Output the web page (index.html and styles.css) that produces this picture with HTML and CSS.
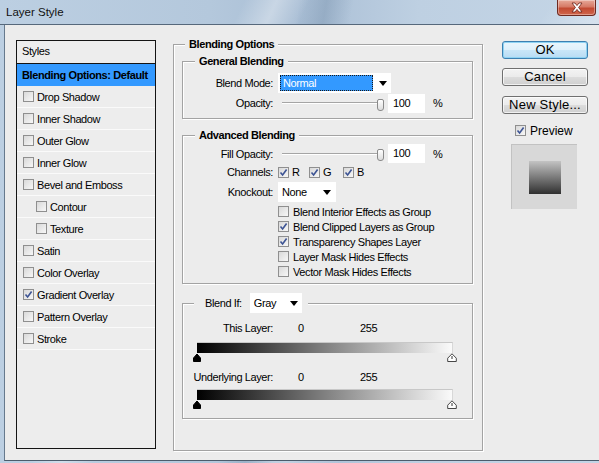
FILE: index.html
```html
<!DOCTYPE html>
<html>
<head>
<meta charset="utf-8">
<title>Layer Style</title>
<link rel="stylesheet" href="styles.css">
</head>
<body>
<div class="window">
  <div class="titlebar">
    <span class="title">Layer Style</span>
    <div class="close">
      <svg width="16" height="11" viewBox="0 0 16 11"><path d="M3 1 L6 1 L8 3.6 L10 1 L13 1 L9.6 5.5 L13 10 L10 10 L8 7.4 L6 10 L3 10 L6.4 5.5 Z" fill="#fff" stroke="#6b2015" stroke-width="0.8"/></svg>
    </div>
  </div>
  <div class="client">
    <div class="styles-list">
      <div class="styles-head">Styles</div>
      <div class="style-row selected">Blending Options: Default</div>
      <div class="style-row"><span class="cb"></span>Drop Shadow</div>
      <div class="style-row"><span class="cb"></span>Inner Shadow</div>
      <div class="style-row"><span class="cb"></span>Outer Glow</div>
      <div class="style-row"><span class="cb"></span>Inner Glow</div>
      <div class="style-row"><span class="cb"></span>Bevel and Emboss</div>
      <div class="style-row sub"><span class="cb"></span>Contour</div>
      <div class="style-row sub"><span class="cb"></span>Texture</div>
      <div class="style-row"><span class="cb"></span>Satin</div>
      <div class="style-row"><span class="cb"></span>Color Overlay</div>
      <div class="style-row"><span class="cb checked"><svg width="9" height="9" viewBox="0 0 9 9"><path d="M1.5 4.5 L3.6 7 L7.6 1.5" fill="none" stroke="#3d5494" stroke-width="1.6"/></svg></span>Gradient Overlay</div>
      <div class="style-row"><span class="cb"></span>Pattern Overlay</div>
      <div class="style-row"><span class="cb"></span>Stroke</div>
    </div>

    <fieldset class="group outer">
      <legend class="legend-outer">Blending Options</legend>

      <fieldset class="group inner general">
        <legend class="legend-inner">General Blending</legend>
        <div class="row r20">
          <span class="lbl">Blend Mode:</span>
          <div class="select blend-select">
            <div class="sel-val">Normal</div>
            <span class="arrow"></span>
          </div>
        </div>
        <div class="row r20">
          <span class="lbl">Opacity:</span>
          <div class="slider"><div class="track"></div><div class="thumb"></div></div>
          <div class="num">100</div>
          <span class="pct">%</span>
        </div>
      </fieldset>

      <fieldset class="group inner advanced">
        <legend class="legend-inner">Advanced Blending</legend>
        <div class="row r19 fill-row">
          <span class="lbl">Fill Opacity:</span>
          <div class="slider"><div class="track"></div><div class="thumb"></div></div>
          <div class="num">100</div>
          <span class="pct">%</span>
        </div>
        <div class="row r18">
          <span class="lbl">Channels:</span>
          <span class="chan chan-r"><span class="cb checked"><svg width="9" height="9" viewBox="0 0 9 9"><path d="M1.5 4.5 L3.6 7 L7.6 1.5" fill="none" stroke="#3d5494" stroke-width="1.6"/></svg></span>R</span>
          <span class="chan chan-g"><span class="cb checked"><svg width="9" height="9" viewBox="0 0 9 9"><path d="M1.5 4.5 L3.6 7 L7.6 1.5" fill="none" stroke="#3d5494" stroke-width="1.6"/></svg></span>G</span>
          <span class="chan"><span class="cb checked"><svg width="9" height="9" viewBox="0 0 9 9"><path d="M1.5 4.5 L3.6 7 L7.6 1.5" fill="none" stroke="#3d5494" stroke-width="1.6"/></svg></span>B</span>
        </div>
        <div class="row r20 knock-row">
          <span class="lbl">Knockout:</span>
          <div class="select knock-select">
            <span>None</span>
            <span class="arrow"></span>
          </div>
        </div>
        <div class="checklist">
          <div class="chk-row"><span class="cb"></span>Blend Interior Effects as Group</div>
          <div class="chk-row"><span class="cb checked"><svg width="9" height="9" viewBox="0 0 9 9"><path d="M1.5 4.5 L3.6 7 L7.6 1.5" fill="none" stroke="#3d5494" stroke-width="1.6"/></svg></span>Blend Clipped Layers as Group</div>
          <div class="chk-row"><span class="cb checked"><svg width="9" height="9" viewBox="0 0 9 9"><path d="M1.5 4.5 L3.6 7 L7.6 1.5" fill="none" stroke="#3d5494" stroke-width="1.6"/></svg></span>Transparency Shapes Layer</div>
          <div class="chk-row"><span class="cb"></span>Layer Mask Hides Effects</div>
          <div class="chk-row"><span class="cb"></span>Vector Mask Hides Effects</div>
        </div>
      </fieldset>

      <fieldset class="group inner blendif">
        <legend class="legend-blendif">
          <span class="bi-label">Blend If:</span>
          <div class="select gray-select">
            <span>Gray</span>
            <span class="arrow"></span>
          </div>
        </legend>
        <div class="row r16 layer-row">
          <span class="lbl">This Layer:</span>
          <span class="v0">0</span>
          <span>255</span>
        </div>
        <div class="grad-bar"></div>
        <div class="thumbs">
          <svg width="8" height="9" viewBox="0 0 8 9"><path d="M4 1 L7.5 5 L7.5 8.5 L0.5 8.5 L0.5 5 Z" fill="#000" stroke="#000" stroke-width="1"/></svg>
          <svg width="10" height="9" viewBox="0 0 10 9"><path d="M5 0.8 L9.3 5.2 L9.3 8.5 L0.7 8.5 L0.7 5.2 Z" fill="#fff" stroke="#333" stroke-width="0.9"/><path d="M5 3 L5 6" stroke="#333" stroke-width="1"/></svg>
        </div>
        <div class="row r16 layer-row under-row">
          <span class="lbl">Underlying Layer:</span>
          <span class="v0">0</span>
          <span>255</span>
        </div>
        <div class="grad-bar bar2"></div>
        <div class="thumbs">
          <svg width="8" height="9" viewBox="0 0 8 9"><path d="M4 1 L7.5 5 L7.5 8.5 L0.5 8.5 L0.5 5 Z" fill="#000" stroke="#000" stroke-width="1"/></svg>
          <svg width="10" height="9" viewBox="0 0 10 9"><path d="M5 0.8 L9.3 5.2 L9.3 8.5 L0.7 8.5 L0.7 5.2 Z" fill="#fff" stroke="#333" stroke-width="0.9"/><path d="M5 3 L5 6" stroke="#333" stroke-width="1"/></svg>
        </div>
      </fieldset>
    </fieldset>

    <div class="buttons">
      <div class="btn default">OK</div>
      <div class="btn">Cancel</div>
      <div class="btn">New Style...</div>
      <div class="preview-row"><span class="cb checked"><svg width="9" height="9" viewBox="0 0 9 9"><path d="M1.5 4.5 L3.6 7 L7.6 1.5" fill="none" stroke="#3d5494" stroke-width="1.6"/></svg></span>Preview</div>
      <div class="preview-box"><div class="preview-swatch"></div></div>
    </div>
  </div>
</div>
</body>
</html>
```

FILE: styles.css
```css
* { box-sizing: border-box; }

body {
  margin: 0;
  font-family: "Liberation Sans", Arial, sans-serif;
  font-size: 11px;
  letter-spacing: -0.4px;
  color: #000;
}

.window {
  width: 599px;
  height: 463px;
  overflow: hidden;
  display: flex;
  flex-direction: column;
  background:
    linear-gradient(115deg, rgba(255,255,255,0) 30%, rgba(255,255,255,0.35) 34%, rgba(255,255,255,0) 38%),
    linear-gradient(100deg, rgba(80,110,140,0) 44%, rgba(80,110,140,0.25) 48%, rgba(80,110,140,0) 52%),
    linear-gradient(125deg, rgba(255,255,255,0) 60%, rgba(255,255,255,0.3) 66%, rgba(255,255,255,0) 72%),
    linear-gradient(90deg, #bccfe2 0%, #b4c8dc 35%, #a9bed5 50%, #bed0e2 70%, #c4d5e6 100%);
}

.titlebar {
  height: 25px;
  flex: none;
  display: flex;
  justify-content: space-between;
  align-items: flex-start;
  padding: 0 3px 0 6px;
  border-bottom: 1px solid #56687b;
}

.title {
  font-size: 11.5px;
  letter-spacing: 0;
  line-height: 24px;
  color: #111;
}

.close {
  width: 39px;
  height: 16px;
  border: 1px solid #6e2a20;
  border-top: none;
  border-radius: 0 0 4px 4px;
  background: linear-gradient(#e7a999 0%, #d67a66 45%, #c24a32 55%, #d0664c 100%);
  display: flex;
  align-items: center;
  justify-content: center;
  box-shadow: inset 0 0 0 1px rgba(255,255,255,0.35);
}

.client {
  flex: none;
  height: 436px;
  margin-left: 4px;
  border-left: 1px solid #66798d;
  border-bottom: 1px solid #4c5c6c;
  background: #ececec;
  display: flex;
  align-items: flex-start;
  padding: 13px 0 0 11px;
}

/* Styles list */
.styles-list {
  width: 140px;
  height: 409px;
  margin-top: 2px;
  border: 1px solid #141414;
  background: #ededed;
  flex: none;
}

.styles-head {
  height: 23px;
  border-bottom: 1px solid #141414;
  padding-left: 5px;
  line-height: 21px;
}

.style-row {
  height: 22px;
  border-bottom: 1px solid #fafafa;
  display: flex;
  align-items: center;
  padding-left: 6px;
}

.style-row.sub { padding-left: 19px; }

.style-row.selected {
  background: #3399ff;
  font-weight: bold;
  padding-left: 5px;
  border-bottom-color: #3399ff;
}

.cb {
  width: 11px;
  height: 11px;
  flex: none;
  border: 1px solid #8f8f8f;
  background: linear-gradient(135deg, #d9d9d9, #f7f7f7);
  display: inline-flex;
  align-items: center;
  justify-content: center;
  margin-right: 3px;
}

.style-row .cb { margin-right: 3px; }

/* Groups */
.group {
  margin: 0;
  min-inline-size: 0;
  border: 1px solid #a3a3a3;
  box-shadow: 1px 1px 0 #fff, inset 1px 1px 0 #fff;
}

.outer {
  width: 310px;
  height: 413px;
  margin-left: 17px;
  flex: none;
  padding: 4px 9px 0 8px;
}

.legend-outer {
  font-weight: bold;
  line-height: 13px;
  padding: 0 4px;
  margin-left: 3px;
  background: #ececec;
}

.inner {
  width: 291px;
  padding: 0;
}

.legend-inner {
  font-weight: bold;
  line-height: 13px;
  padding: 0 4px;
  margin-left: 12px;
  background: #ececec;
}

.general { padding: 5px 0 5px 0; }
.advanced { margin-top: 10px; padding: 0 0 4px 0; }
.blendif { margin-top: 9px; padding: 7px 0 9px 0; }

.row {
  display: flex;
  align-items: center;
}
.r20 { height: 20px; }
.r19 { height: 19px; }
.r18 { height: 18px; }
.r16 { height: 16px; }

.lbl {
  width: 90px;
  flex: none;
  text-align: right;
  margin-right: 5px;
}

.select {
  height: 20px;
  background: #fff;
  display: flex;
  align-items: center;
}

.arrow {
  width: 0;
  height: 0;
  border-left: 4px solid transparent;
  border-right: 4px solid transparent;
  border-top: 5px solid #000;
  margin-left: auto;
}

.blend-select {
  width: 113px;
  padding: 2px;
}
.blend-select .arrow { margin-right: 2px; }

.sel-val {
  width: 93px;
  height: 16px;
  background: #3399ff;
  border: 1px dotted #1a1a1a;
  color: #fff;
  padding-left: 2px;
  line-height: 14px;
}

.slider {
  width: 106px;
  height: 20px;
  position: relative;
  display: flex;
  align-items: center;
}

.track {
  margin-left: 4px;
  width: 98px;
  height: 2px;
  border-top: 1px solid #a5a5a5;
  border-bottom: 1px solid #fff;
}

.thumb {
  position: absolute;
  left: 99px;
  top: 6px;
  width: 7px;
  height: 12px;
  border: 1px solid #8a8a8a;
  border-radius: 2px 2px 3px 3px;
  background: linear-gradient(#ffffff, #dcdcdc);
}

.fill-row .thumb { top: 5px; }

.num {
  width: 37px;
  height: 19px;
  background: #fff;
  margin-left: 4px;
  padding-left: 5px;
  line-height: 19px;
}

.pct { margin-left: 8px; }

.fill-row { margin-top: 2px; }

.chan {
  display: flex;
  align-items: center;
}
.chan .cb { margin-right: 3px; }
.chan-r { width: 31px; }
.chan-g { width: 34px; }

.knock-row { margin-top: 1px; }

.knock-select {
  width: 58px;
  padding: 0 5px 0 4px;
}

.checklist {
  margin-top: 2px;
  margin-left: 95px;
}

.chk-row {
  height: 15px;
  display: flex;
  align-items: center;
}
.chk-row .cb { margin-right: 4px; }

/* Blend If */
.legend-blendif {
  display: flex;
  align-items: center;
  margin-left: 11px;
  padding: 0 6px 0 11px;
  background: #ececec;
}

.bi-label { margin-right: 8px; }

.gray-select {
  width: 52px;
  padding: 0 4px 0 4px;
}

.layer-row .v0 {
  margin-left: 20px;
  width: 62px;
}

.grad-bar {
  margin-top: 6px;
  margin-left: 14px;
  width: 256px;
  height: 11px;
  background: linear-gradient(90deg, #000 0%, #808080 50%, #fafafa 100%);
  border-top: 1px solid #c8c8c8;
  border-right: 1px solid #d8d8d8;
}

.bar2 { margin-top: 4px; }

.thumbs {
  margin-left: 10px;
  width: 264px;
  height: 9px;
  display: flex;
  justify-content: space-between;
  align-items: flex-end;
}
.thumbs svg { display: block; }

.under-row { margin-top: 7px; }

/* Buttons */
.buttons {
  width: 86px;
  margin-left: 19px;
  margin-top: 3px;
  flex: none;
  display: flex;
  flex-direction: column;
}

.btn {
  height: 18px;
  border: 1px solid #707070;
  border-radius: 3px;
  background: linear-gradient(#f3f3f3 0%, #ebebeb 48%, #dcdcdc 52%, #cfcfcf 100%);
  box-shadow: inset 0 0 0 1px rgba(255,255,255,0.7);
  text-align: center;
  font-size: 13px;
  letter-spacing: 0.2px;
  line-height: 16px;
  margin-top: 9px;
}

.btn.default {
  margin-top: 0;
  border-color: #3c7fb1;
  box-shadow: inset 0 0 0 1px #8fd3f3;
  background: linear-gradient(#eaf5fc 0%, #dff0fb 48%, #c9e6f8 52%, #b7dbf4 100%);
}

.btn + .btn + .btn { margin-top: 10px; }

.preview-row {
  margin-top: 10px;
  height: 13px;
  display: flex;
  align-items: center;
  padding-left: 13px;
  font-size: 12px;
  letter-spacing: 0;
}
.preview-row .cb { margin-right: 4px; }

.preview-box {
  margin-top: 7px;
  margin-left: 9px;
  width: 66px;
  height: 65px;
  background: #d8d8d8;
  border-top: 1px solid #c2c2c2;
  border-left: 1px solid #c2c2c2;
  display: flex;
  align-items: center;
  justify-content: center;
}

.preview-swatch {
  width: 32px;
  height: 33px;
  background: linear-gradient(#c3c3c3, #303030);
}
```
